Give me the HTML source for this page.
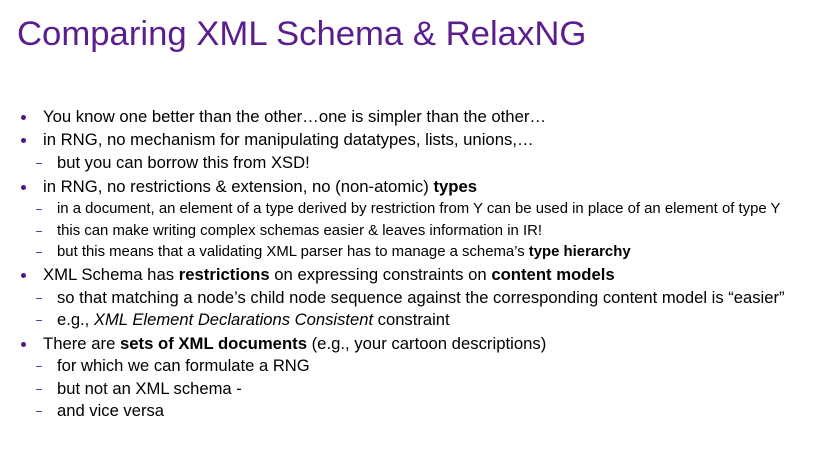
<!DOCTYPE html>
<html><head><meta charset="utf-8"><style>
body{margin:0;width:835px;height:455px;background:#fff;font-family:"Liberation Sans",sans-serif;color:#000;position:relative;overflow:hidden}
h1{position:absolute;left:17px;top:12px;margin:0;font-weight:normal;font-size:34.7px;color:#5b1e8f;white-space:nowrap;line-height:44px}
.l{position:absolute;white-space:nowrap;line-height:20px}
.b{left:43px;font-size:16.7px}
.s{left:57px;font-size:16.6px}
.t{left:57px;font-size:14.9px}
.b:before{content:"";position:absolute;left:-22px;top:8px;width:5px;height:5px;border-radius:50%;background:#4e1a80}
.s:before,.t:before{content:"";position:absolute;left:-21px;top:10px;width:6px;height:1px;background:#6a3a9a}
</style></head><body>
<h1>Comparing XML Schema &amp; RelaxNG</h1>
<div class="l b" style="top:107px">You know one better than the other…one is simpler than the other…</div>
<div class="l b" style="top:130px">in RNG, no mechanism for manipulating datatypes, lists, unions,…</div>
<div class="l s" style="top:153px">but you can borrow this from XSD!</div>
<div class="l b" style="top:177px">in RNG, no restrictions &amp; extension, no (non-atomic) <b>types</b></div>
<div class="l t" style="top:199px">in a document, an element of a type derived by restriction from Y can be used in place of an element of type Y</div>
<div class="l t" style="top:221px">this can make writing complex schemas easier &amp; leaves information in IR!</div>
<div class="l t" style="top:242px">but this means that a validating XML parser has to manage a schema’s <b>type hierarchy</b></div>
<div class="l b" style="top:265px">XML Schema has <b>restrictions</b> on expressing constraints on <b>content models</b></div>
<div class="l s" style="top:288px">so that matching a node’s child node sequence against the corresponding content model is “easier”</div>
<div class="l s" style="top:310px">e.g., <i>XML Element Declarations Consistent</i> constraint</div>
<div class="l b" style="top:334px">There are <b>sets of XML documents</b> (e.g., your cartoon descriptions)</div>
<div class="l s" style="top:356px">for which we can formulate a RNG</div>
<div class="l s" style="top:379px">but not an XML schema -</div>
<div class="l s" style="top:401px">and vice versa</div>
</body></html>
